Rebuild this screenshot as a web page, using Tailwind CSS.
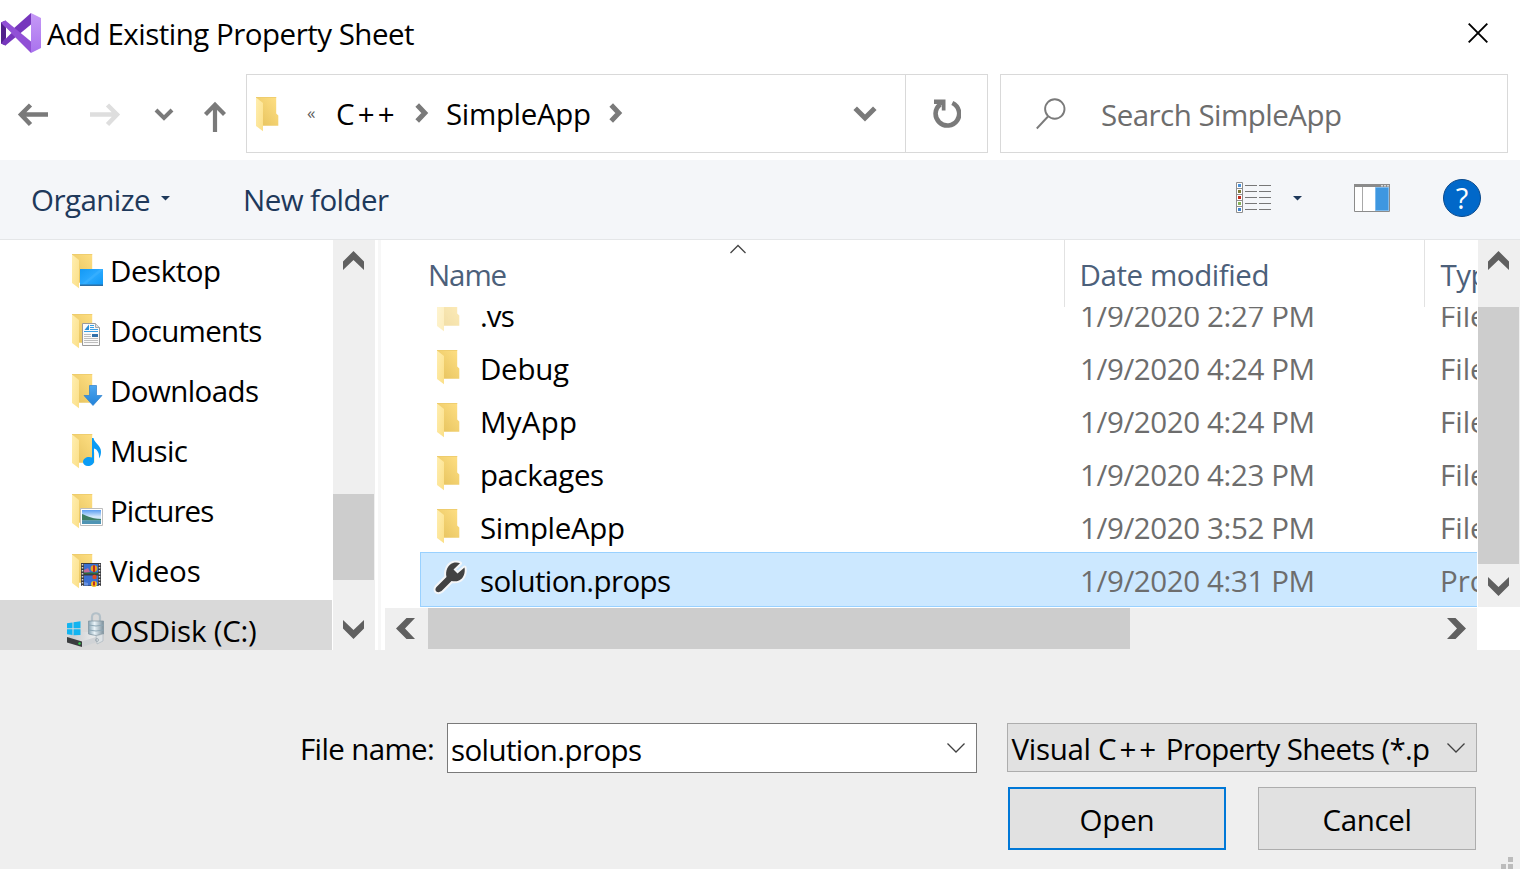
<!DOCTYPE html>
<html lang="en">
<head>
<meta charset="utf-8">
<title>Add Existing Property Sheet</title>
<script src="https://cdn.jsdelivr.net/npm/@tailwindcss/browser@4"></script>
</head>
<body class="w-[1520px] h-[869px] overflow-hidden bg-white text-black font-['Open_Sans','Noto_Sans',sans-serif] text-[29.5px] leading-[40px] whitespace-nowrap">

<!-- Shared icon shapes -->
<svg class="absolute w-0 h-0">
  <defs>
    <linearGradient id="gBack" x1="0" y1="1" x2="1" y2="0"><stop offset="0.2" stop-color="#eac763"/><stop offset="1" stop-color="#ffe085"/></linearGradient>
    <linearGradient id="gFlap" x1="0" y1="0" x2="1" y2="1"><stop offset="0" stop-color="#ffeeb0"/><stop offset="1" stop-color="#fbdf87"/></linearGradient>
    <linearGradient id="gBlue" x1="0" y1="0" x2="1" y2="1"><stop offset="0" stop-color="#1399f5"/><stop offset=".5" stop-color="#2aa9ff"/><stop offset="1" stop-color="#0c96f3"/></linearGradient>
    <linearGradient id="gArrow" x1="0" y1="0" x2="0" y2="1"><stop offset="0" stop-color="#4da6ee"/><stop offset="1" stop-color="#2283da"/></linearGradient>
    <linearGradient id="gVs" x1="0" y1="0" x2="0" y2="1"><stop offset="0" stop-color="#c69af6"/><stop offset="1" stop-color="#a972ee"/></linearGradient>
    <linearGradient id="gSky" x1="0" y1="0" x2="0" y2="1"><stop offset="0" stop-color="#5a9df2"/><stop offset=".5" stop-color="#d8ebfb"/><stop offset="1" stop-color="#7fb7d8"/></linearGradient>
    <linearGradient id="gDisk" x1="0" y1="0" x2="1" y2="0"><stop offset="0" stop-color="#c4c6c8"/><stop offset="1" stop-color="#f1f2f3"/></linearGradient>
    <linearGradient id="gLock" x1="0" y1="0" x2="1" y2="0"><stop offset="0" stop-color="#88a3b3"/><stop offset=".4" stop-color="#eaf4f9"/><stop offset="1" stop-color="#7d909c"/></linearGradient>
    <symbol id="folder" viewBox="0 0 24 36">
      <path d="M0 0H20.2V16.5L22.3 18.5V28.7H6.5Z" fill="url(#gBack)"/>
      <path d="M0 .5L7 6V34.3L0 29Z" fill="url(#gFlap)"/>
      <path d="M0 0H20.2V.8H0Z" fill="#edcb6c"/>
    </symbol>
    <symbol id="up" viewBox="0 0 21 19"><path d="M0 10.500L10.500 0L21 10.500V19L10.500 9L0 19Z" fill="#606060"/></symbol>
    <symbol id="combo" viewBox="0 0 18 10"><path d="M.5 .5L9 9L17.500 .5" fill="none" stroke="#404040" stroke-width="1.300"/></symbol>
  </defs>
</svg>

<!-- Title bar -->
<header class="h-[74px] flex items-center pl-px pb-[7px] pr-[32px]">
  <svg class="w-10 h-10 mb-[1px]" viewBox="0 0 40 40">
    <path d="M0 9.500L4.500 7.500L5 11V29L4.500 32.500L0 30.500Z" fill="#52218b"/>
    <path d="M0 30.500L4.500 32.500L30 11.500V0L12 16Z" fill="#7636bd"/>
    <path d="M0 9.500L4.500 7.500L30 28.500V40L2 12Z" fill="#9150d6"/>
    <path d="M5 14.500L10.500 20L5 25.500Z" fill="#fff"/>
    <path d="M30 13.500L21.500 20L30 26.500Z" fill="#fff"/>
    <path d="M30 0L40 5V35L30 40Z" fill="url(#gVs)"/>
  </svg>
  <h1 class="ml-[6px] tracking-[-0.5px]">Add Existing Property Sheet</h1>
  <svg class="w-5 h-5 ml-auto mb-px" viewBox="0 0 20 20"><path d="M.7 .7L19.300 19.300M19.300 .7L.7 19.300" stroke="#000" stroke-width="1.900"/></svg>
</header>

<!-- Navigation row -->
<nav class="h-[86px] flex items-start">
  <div class="w-[246px] h-[79px] flex items-center">
    <svg class="w-[246px] h-[79px]" viewBox="0 74 246 79" fill="none" stroke-width="4.500">
      <path d="M48 114.500H21M30.500 105L21 114.500L30.500 124.500" stroke="#7a7a7a"/>
      <path d="M90 114.500H117M107.500 105L117 114.500L107.500 124.500" stroke="#dedede"/>
      <path d="M156 110L164 118L172 110" stroke="#7a7a7a" stroke-width="4"/>
      <path d="M215 132V105M205.500 114.500L215 104.800L224.500 114.500" stroke="#7a7a7a" stroke-width="4.200"/>
    </svg>
  </div>
  <div class="w-[742px] h-[79px] border border-[#d9d9d9] flex items-center">
    <svg class="w-6 h-9 ml-[9px] mt-[3px] shrink-0"><use href="#folder"/></svg>
    <span class="ml-[27px] w-[12px] text-[17px] leading-[20px] mb-[2px] text-[#606060]">«</span>
    <span class="ml-[17px] w-[62px] tracking-[3.2px]">C++</span>
    <svg class="w-[14px] h-[20px] ml-[17px] mb-[2px]" viewBox="0 0 14 20"><path d="M2.200 2L9.800 10L2.200 18" fill="none" stroke="#7a7a7a" stroke-width="5"/></svg>
    <span class="ml-[17px] w-[147px] tracking-[-0.34px]">SimpleApp</span>
    <svg class="w-[14px] h-[20px] ml-[16px] mb-[2px]" viewBox="0 0 14 20"><path d="M2.200 2L9.800 10L2.200 18" fill="none" stroke="#7a7a7a" stroke-width="5"/></svg>
    <svg class="w-[24px] h-[16px] ml-auto mr-[28px]" viewBox="0 0 24 16"><path d="M2.200 2.200L12 12L21.800 2.200" fill="none" stroke="#7a7a7a" stroke-width="5"/></svg>
    <div class="w-[82px] h-full border-l border-[#d9d9d9] flex items-center justify-center">
      <svg class="w-[28px] h-[29px]" viewBox="0 0 28 29"><path d="M19.300 4A11.800 11.800 0 1 1 7.300 5.300" fill="none" stroke="#7a7a7a" stroke-width="4.600"/><path d="M1 .5H12.500V11.500H8.800V6.500L5 5H1Z" fill="#7a7a7a"/></svg>
    </div>
  </div>
  <div class="ml-3 w-[508px] h-[79px] border border-[#d9d9d9] flex items-center pl-[35px]">
    <svg class="w-[30px] h-[32px]" viewBox="0 0 30 32" fill="none" stroke="#7a7a7a" stroke-width="1.900"><circle cx="18.800" cy="11" r="9.700"/><path d="M12 18.500L.8 30.500"/></svg>
    <span class="ml-[35px] mt-[3px] text-[#6d6d6d] tracking-[-0.52px]">Search SimpleApp</span>
  </div>
</nav>

<!-- Command bar -->
<div class="h-20 bg-[#f4f6f9] border-b border-[#e4e6e8] flex items-center text-[#1e395b] pl-[31px]">
  <span class="w-[120px] tracking-[-0.54px]">Organize</span>
  <svg class="w-[9px] h-[5px] ml-[10px] mb-[2px]" viewBox="0 0 9 5"><path d="M0 0H9L4.500 4.500Z" fill="#1e395b"/></svg>
  <span class="ml-[73px] tracking-[-0.56px]">New folder</span>
  <svg class="w-[36px] h-[32px] ml-auto mb-[3px]" viewBox="0 0 36 32">
    <path d="M.5 .5H6.500V30.500H.5ZM.5 6.500H6.500M.5 12.500H6.500M.5 18.500H6.500M.5 24.500H6.500" fill="#fff" stroke="#8e8e8e"/>
    <path d="M2 2H5V5H2Z" fill="#4a90d9"/><path d="M2 8H5V11H2Z" fill="#7b7a38"/><path d="M2 14H5V17H2Z" fill="#c42b1c"/><path d="M2 20H5V23H2Z" fill="#86b25a"/><path d="M2 26H5V29H2Z" fill="#3f82cf"/>
    <path d="M9 3.500H21M23 3.500H35M9 9.500H21M23 9.500H35M9 15.500H21M23 15.500H35M9 21.500H21M23 21.500H35M9 27.500H21M23 27.500H35" stroke="#777"/>
  </svg>
  <svg class="w-[9px] h-[5px] ml-[21px] mb-[2px]" viewBox="0 0 9 5"><path d="M0 0H9L4.500 4.500Z" fill="#1e395b"/></svg>
  <svg class="w-[36px] h-[28px] ml-[52px] mb-[3px]" viewBox="0 0 36 28">
    <path d="M.5 .5H35.500V27.500H.5Z" fill="#fff" stroke="#8b8b8b"/><path d="M0 0H36V3H0Z" fill="#8b8b8b"/><path d="M8.500 3V27" stroke="#a8a8a8"/>
    <path d="M27 1H29V2.500H27ZM30 1H32V2.500H30ZM33 1H35V2.500H33Z" fill="#d6d6d6"/>
    <path d="M21.500 3.500H34.500V26.500H21.500Z" fill="#3e97e0" stroke="#7cb9ec"/>
  </svg>
  <span class="w-[38px] h-[38px] ml-[53px] mr-[39px] mb-[3px] rounded-full bg-[#0168c9] border border-[#0b4a8c] text-white text-[29px] font-medium leading-[35px] text-center">?</span>
</div>

<!-- Folder tree and file list -->
<main class="h-[410px] flex overflow-hidden">
  <aside class="w-[332px] h-[410px] overflow-hidden">
    <div class="h-[60px] flex items-center pl-[66px]">
      <svg class="w-[40px] h-[40px] shrink-0" viewBox="0 0 40 40"><use href="#folder" x="6" y="4" width="24" height="36"/><path d="M14 19H37V36H14Z" fill="url(#gBlue)"/><path d="M14 34.500H37V36H14Z" fill="#2d6fa5"/><path d="M16 34L34 19H37V20L20 34Z" fill="#47b6ff" opacity=".4"/></svg>
      <span class="ml-[4px] mt-[2px] tracking-[-0.46px]">Desktop</span>
    </div>
    <div class="h-[60px] flex items-center pl-[66px]">
      <svg class="w-[40px] h-[40px] shrink-0" viewBox="0 0 40 40"><use href="#folder" x="6" y="4" width="24" height="36"/><path d="M16.500 13.500H29.500L33.500 17.500V35.500H16.500Z" fill="#fafafa" stroke="#9a9a9a"/><path d="M29.500 13.500V17.500H33.500" fill="#ddd" stroke="#aaa"/><path d="M24 15.500H28M24 17.500H28M24 19.500H32M18 21.500H32" stroke="#3aa0e6"/><path d="M18.500 20L23 14.500V20Z" fill="#2d8fd6"/><path d="M18 24.500H25M18 26.500H25M18 28.500H32M18 30.500H32M18 32.500H32" stroke="#bdbdbd"/><path d="M26 24H32V27H26Z" fill="#2f6fa9"/></svg>
      <span class="ml-[4px] mt-[2px] tracking-[-0.7px]">Documents</span>
    </div>
    <div class="h-[60px] flex items-center pl-[66px]">
      <svg class="w-[40px] h-[40px] shrink-0" viewBox="0 0 40 40"><use href="#folder" x="6" y="4" width="24" height="36"/><path d="M23.500 15.500H30.500V25.500H36L27 35.500L18 25.500H23.500Z" fill="url(#gArrow)" stroke="#2b7fce" stroke-width=".7"/></svg>
      <span class="ml-[4px] mt-[2px] tracking-[-0.59px]">Downloads</span>
    </div>
    <div class="h-[60px] flex items-center pl-[66px]">
      <svg class="w-[40px] h-[40px] shrink-0" viewBox="0 0 40 40"><use href="#folder" x="6" y="4" width="24" height="36"/><path d="M26 8H27.500C28.500 13.500 35 15 35 22C35 25 34 27 33 28.500C33.500 24 32 19.500 28 18.500V31.500C28 34 25 36 22 36C19 36 17 34.300 17 32C17 29 20 27 23 27C24.200 27 25.300 27.200 26 27.600Z" fill="#0a9cf5"/></svg>
      <span class="ml-[4px] mt-[2px] tracking-[-0.6px]">Music</span>
    </div>
    <div class="h-[60px] flex items-center pl-[66px]">
      <svg class="w-[40px] h-[40px] shrink-0" viewBox="0 0 40 40"><use href="#folder" x="6" y="4" width="24" height="36"/><path d="M14.500 18.500H36.500V35.500H14.500Z" fill="#fff" stroke="#bdbdbd"/><path d="M16 20H35V34H16Z" fill="url(#gSky)"/><path d="M16 24C20 25 24 28.500 35 29V30.500H16Z" fill="#3d7d63"/><path d="M16 30.500H35V34H16Z" fill="#4f94b4"/></svg>
      <span class="ml-[4px] mt-[2px] tracking-[-0.9px]">Pictures</span>
    </div>
    <div class="h-[60px] flex items-center pl-[66px]">
      <svg class="w-[40px] h-[40px] shrink-0" viewBox="0 0 40 40"><use href="#folder" x="6" y="4" width="24" height="36"/><path d="M15 13H35V36H15Z" fill="#3c3c40"/><path d="M18 14H32V24H18ZM18 25.500H32V35.500H18Z" fill="#3b6fd0"/><path d="M16.500 14V36M33.500 14V36" stroke="#d8d8d8" stroke-width="1.500" stroke-dasharray="1.500 1.500"/><path d="M18 20L22 18L24 22L18 23.500Z" fill="#c0699a"/><circle cx="28" cy="18.500" r="3.300" fill="#e5a521"/><path d="M27 15.200H29V22H27Z" fill="#c22a22"/><path d="M18 22.500H32V24H18Z" fill="#2f6b39"/><circle cx="28.500" cy="27" r="2.200" fill="#df4d20"/><circle cx="28" cy="34" r="3" fill="#f0c01e"/><path d="M27 31.500H29V35.500H27Z" fill="#c22a22"/><path d="M18 32L22 33V35.500H18Z" fill="#6a93e0"/></svg>
      <span class="ml-[4px] mt-[2px] tracking-[-0.15px]">Videos</span>
    </div>
    <div class="h-[60px] flex items-center pl-[66px] bg-[#d9d9d9]">
      <svg class="w-[40px] h-[40px] shrink-0" viewBox="0 0 40 40">
        <path d="M1 28L10 22H34L32 30L16 34.500L1 30Z" fill="url(#gDisk)"/><path d="M1 27L16 31.500V37L1 32.500Z" fill="#3b3d3f"/><path d="M16 31.500L33 26V31.500L16 37Z" fill="#d0d3d6"/><circle cx="13.500" cy="33.500" r="1.200" fill="#2fd14a"/>
        <path d="M1 13.200L6.500 12.400V18.200H1ZM7.500 12.200L14.500 11.200V18.200H7.500ZM1 19.200H6.500V25L1 24.200ZM7.500 19.200H14.500V25L7.500 25.200Z" fill="#12b4f0"/>
        <path d="M26 12V7C26 2 34 2 34 7V12" fill="none" stroke="#b3c0c8" stroke-width="2.200"/>
        <path d="M22.500 11H37.500V24Q30 27 22.500 24Z" fill="url(#gLock)" stroke="#7e929e" stroke-width=".7"/><path d="M22.500 15Q30 17 37.500 15M22.500 20Q30 22 37.500 20" fill="none" stroke="#8fa8b6"/>
        <path d="M30 26L37 24L37 31L31 34Z" fill="#dde2e5" stroke="#a4b0b8" stroke-width=".6"/><circle cx="31" cy="30" r="1.500" fill="none" stroke="#9aa7b0" stroke-width=".8"/>
      </svg>
      <span class="ml-[4px] mt-[2px] tracking-[-0.22px]">OSDisk (C:)</span>
    </div>
  </aside>

  <!-- Tree scrollbar -->
  <div class="ml-px w-[42px] h-[410px] bg-[#efefef] flex flex-col">
    <div class="h-[254px] pt-[11px] pl-[10px]"><svg class="w-[21px] h-[19px]"><use href="#up"/></svg></div>
    <div class="h-[86px] w-[41px] bg-[#cdcdcd]"></div>
    <div class="pt-[40px] pl-[10px]"><svg class="w-[21px] h-[19px] rotate-180"><use href="#up"/></svg></div>
  </div>
  <div class="ml-[3px] w-[3px] h-[410px] bg-[#f7f7f7]"></div>

  <!-- File list -->
  <section class="w-[1139px] h-[410px]">
    <div class="flex h-[367px]">
      <div class="w-[1096px] overflow-hidden">
        <div class="h-[67px] flex text-[#4c607a]">
          <div class="w-[684px] border-r border-[#e2e2e2] pl-[47px] relative">
            <svg class="absolute left-[349px] top-[4px] w-[16px] h-[10px]" viewBox="0 0 16 10"><path d="M.5 9L8 1.500L15.500 9" fill="none" stroke="#444" stroke-width="1.300"/></svg>
            <div class="pt-[15px] tracking-[-1.1px]">Name</div>
          </div>
          <div class="w-[360px] border-r border-[#e2e2e2] pl-[14.500px] pt-[15px] tracking-[-0.42px]">Date modified</div>
          <div class="w-[52px] overflow-hidden pl-[15.500px] pt-[15px] tracking-[-0.5px]">Type</div>
        </div>
        <div class="h-[300px] overflow-hidden pl-[39px]">
          <div class="-mt-[18px] h-[53px] flex items-center pl-[17px] *:shrink-0">
            <svg class="w-6 h-9 mb-px opacity-55"><use href="#folder"/></svg>
            <span class="ml-[19px] w-[600px] tracking-[-0.9px]">.vs</span><span class="w-[360px] text-[#6d6d6d] tracking-[-0.38px]">1/9/2020 2:27 PM</span><span class="text-[#6d6d6d]">File folder</span>
          </div>
          <div class="h-[53px] flex items-center pl-[17px] *:shrink-0">
            <svg class="w-6 h-9 mb-px"><use href="#folder"/></svg>
            <span class="ml-[19px] w-[600px] tracking-[-0.28px]">Debug</span><span class="w-[360px] text-[#6d6d6d] tracking-[-0.38px]">1/9/2020 4:24 PM</span><span class="text-[#6d6d6d]">File folder</span>
          </div>
          <div class="h-[53px] flex items-center pl-[17px] *:shrink-0">
            <svg class="w-6 h-9 mb-px"><use href="#folder"/></svg>
            <span class="ml-[19px] w-[600px] tracking-[0.25px]">MyApp</span><span class="w-[360px] text-[#6d6d6d] tracking-[-0.38px]">1/9/2020 4:24 PM</span><span class="text-[#6d6d6d]">File folder</span>
          </div>
          <div class="h-[53px] flex items-center pl-[17px] *:shrink-0">
            <svg class="w-6 h-9 mb-px"><use href="#folder"/></svg>
            <span class="ml-[19px] w-[600px] tracking-[-0.43px]">packages</span><span class="w-[360px] text-[#6d6d6d] tracking-[-0.38px]">1/9/2020 4:23 PM</span><span class="text-[#6d6d6d]">File folder</span>
          </div>
          <div class="h-[53px] flex items-center pl-[17px] *:shrink-0">
            <svg class="w-6 h-9 mb-px"><use href="#folder"/></svg>
            <span class="ml-[19px] w-[600px] tracking-[-0.34px]">SimpleApp</span><span class="w-[360px] text-[#6d6d6d] tracking-[-0.38px]">1/9/2020 3:52 PM</span><span class="text-[#6d6d6d]">File folder</span>
          </div>
          <div class="-mt-[2px] h-[55px] w-[1300px] flex items-center pl-[12px] pt-[2px] bg-[#cce8ff] border border-[#99d1ff] *:shrink-0">
            <svg class="w-[36px] h-[36px] mb-[6px]" viewBox="0 0 36 36">
              <g stroke-linejoin="round"><path d="M3.500 27L13.500 17C12 11 15 4.500 20 3C22.500 2.300 25 2.500 27 3.300L20.500 9.500L24.500 13.500L31.500 7.500C32.500 13 30.500 18.500 26 20.500C23.500 21.500 21 21.500 18.500 21L8.500 31C4.500 34 .5 30.500 3.500 27Z" fill="#f4f6f8" stroke="#f4f6f8" stroke-width="4"/><path d="M3.500 27L13.500 17C12 11 15 4.500 20 3C22.500 2.300 25 2.500 27 3.300L20.500 9.500L24.500 13.500L31.500 7.500C32.500 13 30.500 18.500 26 20.500C23.500 21.500 21 21.500 18.500 21L8.500 31C4.500 34 .5 30.500 3.500 27Z" fill="#424242"/></g>
            </svg>
            <span class="ml-[11px] w-[600px] tracking-[-0.6px]">solution.props</span><span class="w-[360px] text-[#6d6d6d] tracking-[-0.38px]">1/9/2020 4:31 PM</span><span class="text-[#6d6d6d]">Project Property File</span>
          </div>
        </div>
      </div>
      <div class="ml-px w-[42px] bg-[#efefef]">
        <div class="h-[67px] pt-[11px] pl-[10px]"><svg class="w-[21px] h-[19px]"><use href="#up"/></svg></div>
        <div class="h-[257px] w-[41px] bg-[#cdcdcd]"></div>
        <div class="pt-[13px] pl-[10px]"><svg class="w-[21px] h-[19px] rotate-180"><use href="#up"/></svg></div>
      </div>
    </div>
    <div class="mt-px ml-[4px] w-[1092px] h-[42px] bg-[#efefef] flex">
      <svg class="w-[19px] h-[21px] mt-[10px] ml-[11px]" viewBox="0 0 19 21"><path d="M10.500 0H19L9 10.500L19 21H10.500L0 10.500Z" fill="#606060"/></svg>
      <div class="ml-[13px] w-[702px] h-[41px] bg-[#cdcdcd]"></div>
      <svg class="w-[19px] h-[21px] mt-[10px] ml-auto mr-[11px]" viewBox="0 0 19 21"><path d="M8.500 0H0L10 10.500L0 21H8.500L19 10.500Z" fill="#606060"/></svg>
    </div>
  </section>
</main>

<!-- File name, filter and buttons -->
<footer class="h-[219px] bg-[#efefef] pt-[73px] relative">
  <div class="flex items-start pl-[300px]">
    <label class="w-[147px] mt-[6px] tracking-[-0.63px]">File name:</label>
    <div class="w-[530px] h-[50px] bg-white border border-[#7a7a7a] flex items-center pl-[3px] pr-[11px] pt-[3px]">
      <span class="tracking-[-0.6px]">solution.props</span>
      <svg class="w-[18px] h-[10px] ml-auto mb-[3px]"><use href="#combo"/></svg>
    </div>
    <div class="ml-[30px] w-[470px] h-[49px] bg-[#e1e1e1] border border-[#adadad] flex items-center pl-[3.500px] pr-[11px] pt-[3px]">
      <span class="tracking-[-0.7px]"><span class="tracking-[-0.3px]">Visual </span><span class="tracking-[2.8px]">C++</span> Property Sheets (*.p</span>
      <svg class="w-[18px] h-[10px] ml-auto mb-[3px]"><use href="#combo"/></svg>
    </div>
  </div>
  <div class="flex mt-[14px] pl-[1008px] gap-8">
    <button class="w-[218px] h-[63px] bg-[#e1e1e1] border-2 border-[#0078d7] pt-[2px] tracking-[-0.15px]">Open</button>
    <button class="w-[218px] h-[63px] bg-[#e1e1e1] border border-[#adadad] pt-[2px] tracking-[-0.35px]">Cancel</button>
  </div>
  <svg class="absolute right-0 bottom-0 w-[19px] h-[12px]" viewBox="0 0 19 12"><path d="M7 0H12V5H7ZM0 7H5V12H0ZM7 7H12V12H7Z" fill="#bcbcbc"/></svg>
</footer>
</body>
</html>
